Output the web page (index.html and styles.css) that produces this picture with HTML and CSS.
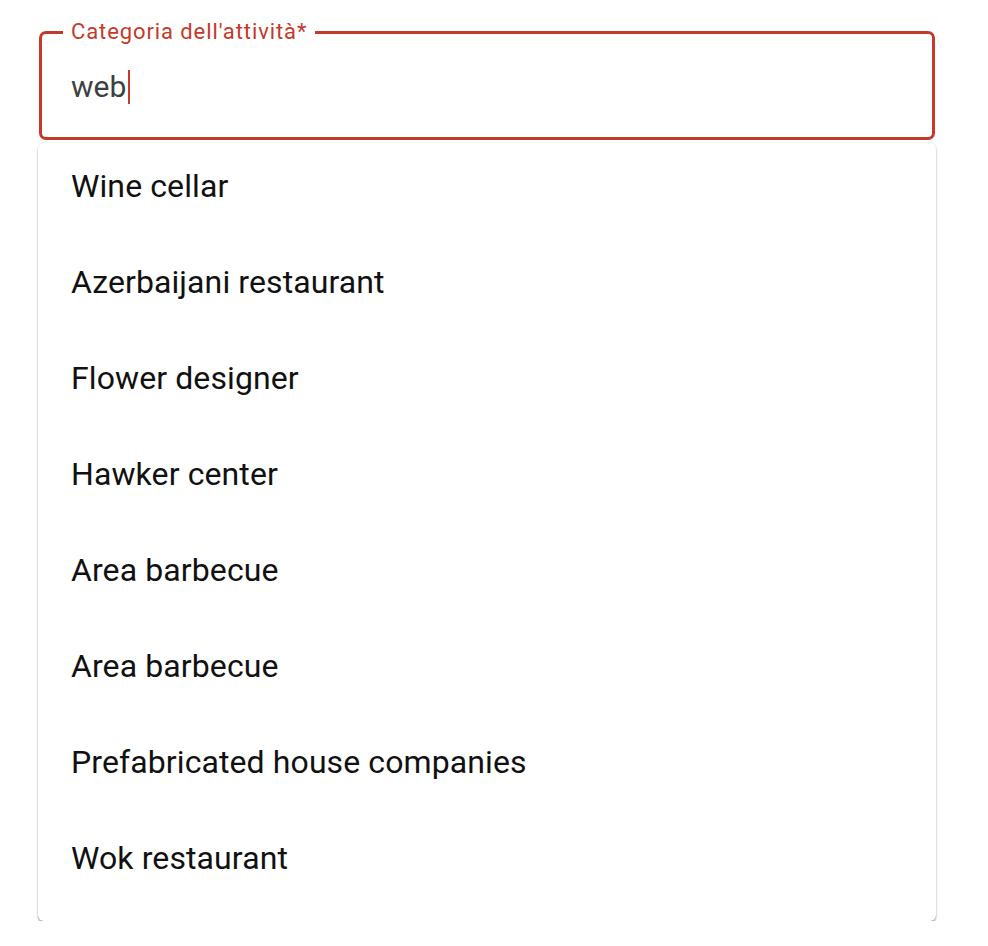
FILE: index.html
```html
<!DOCTYPE html>
<html lang="it">
<head>
<meta charset="utf-8">
<link rel="stylesheet" href="styles.css">
</head>
<body>
<div class="wrap">
  <div class="field">
    <span class="label">Categoria dell'attività*</span>
    <div class="value">web<span class="caret"></span></div>
  </div>
  <ul class="menu">
    <li>Wine cellar</li>
    <li>Azerbaijani restaurant</li>
    <li>Flower designer</li>
    <li>Hawker center</li>
    <li>Area barbecue</li>
    <li>Area barbecue</li>
    <li>Prefabricated house companies</li>
    <li>Wok restaurant</li>
  </ul>
</div>
</body>
</html>
```
FILE: styles.css
```css
html, body {
  margin: 0;
  padding: 0;
  background: #fff;
}
body {
  font-family: Roboto, "Noto Sans", sans-serif;
}
.wrap {
  width: 898px;
  padding: 31px 0 0 38px;
}
.field {
  position: relative;
  margin-left: 1px;
  width: 896px;
  height: 109px;
  box-sizing: border-box;
  border: 3px solid #c5392b;
  border-radius: 7px;
  display: flex;
  align-items: flex-start;
  padding: 35px 0 0 29px;
}
.label {
  position: absolute;
  top: -13px;
  left: 21px;
  padding: 0 8px;
  background: #fff;
  color: #c5392b;
  font-size: 22px;
  line-height: 22px;
  letter-spacing: 0.9px;
}
.value {
  font-size: 30px;
  color: #3c4043;
  display: flex;
  align-items: center;
}
.caret {
  display: inline-block;
  width: 2px;
  height: 34px;
  background: #c5392b;
  margin-left: 2px;
}
.menu {
  list-style: none;
  margin: 3px 0 0 0;
  padding: 5px 0;
  background: #fff;
  border-radius: 6px;
  box-shadow: 0 2px 2px rgba(0,0,0,0.32), 0 0 2px rgba(0,0,0,0.14);
}
.menu li {
  height: 96px;
  box-sizing: border-box;
  padding: 19px 0 0 33px;
  font-size: 32px;
  letter-spacing: 0.1px;
  color: #111;
}
```
